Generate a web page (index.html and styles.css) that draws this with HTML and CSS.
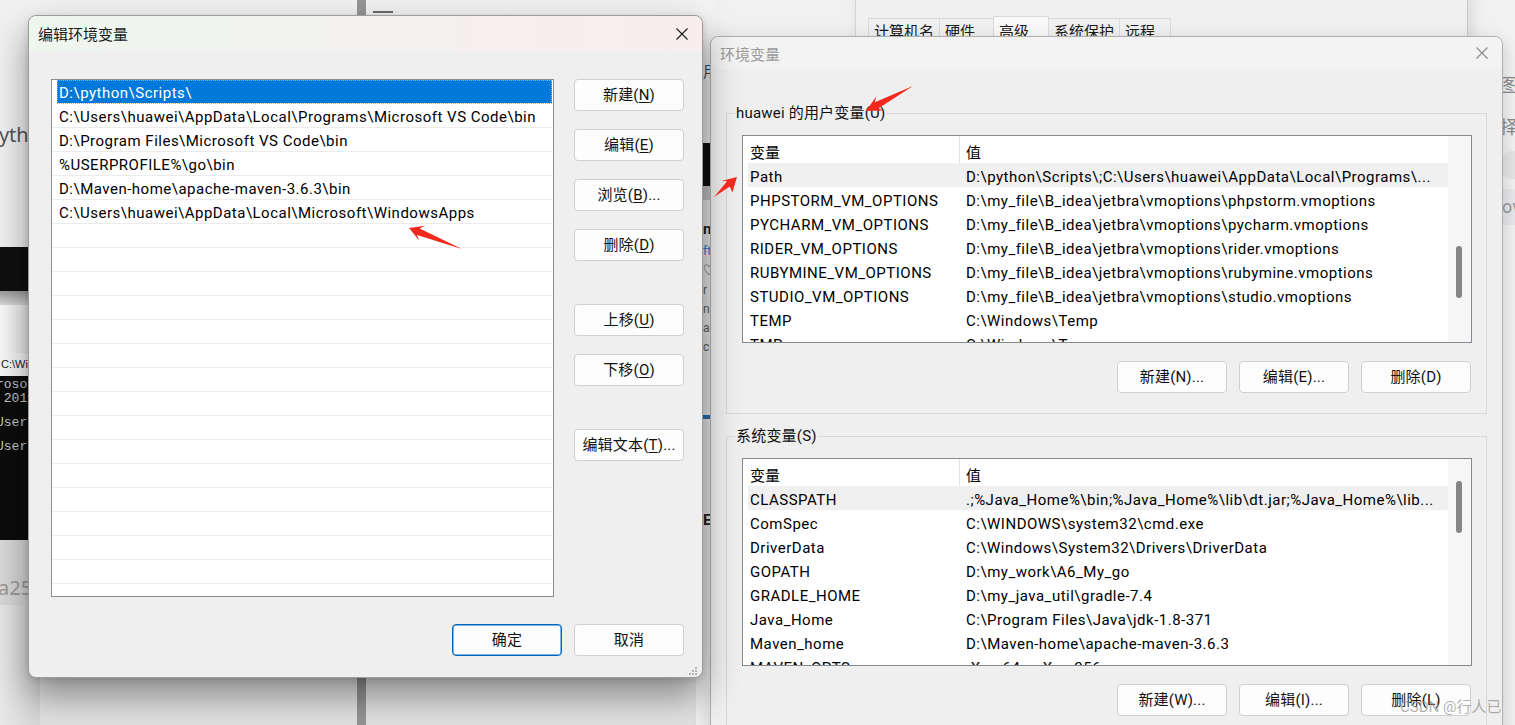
FILE: index.html
```html
<!DOCTYPE html>
<html lang="zh-CN">
<head>
<meta charset="utf-8">
<title>编辑环境变量</title>
<link rel="stylesheet" href="styles.css">
</head>
<body>
<div class="desktop">

  <!-- background content visible around the dialogs -->
  <div class="bg-left">
    <div class="bl-top"><span class="bl-ytho">pytho</span></div>
    <div class="bl-black"></div>
    <div class="bl-grad"></div>
    <div class="bl-white"></div>
    <div class="bl-cmdbar">C:\Wir</div>
    <div class="bl-term">
      <div class="t1">rosof</div>
      <div class="t2">&nbsp;2019</div>
      <div class="t3">Users</div>
      <div class="t3">Users</div>
    </div>
    <div class="bl-a25">a25</div>
    <div class="bl-rest"></div>
  </div>

  <div class="bg-vscroll"></div>
  <div class="bg-dash"></div>

  <div class="bg-mid">
    <div class="bm-sp1"></div>
    <div class="bm-txt">用</div>
    <div class="bm-sp2"></div>
    <div class="bm-black"></div>
    <div class="bm-gray"></div>
    <div class="bm-frag">n</div>
    <div class="bm-frag blue">ft</div>
    <div class="bm-frag small">♡</div>
    <div class="bm-frag small">r</div>
    <div class="bm-frag small">n</div>
    <div class="bm-frag small">ar</div>
    <div class="bm-frag small">c</div>
    <div class="bm-sp3"></div>
    <div class="bm-bluebar"></div>
    <div class="bm-sp4"></div>
    <div class="bm-frag">E</div>
  </div>

  <div class="bg-right">
    <div class="br-sp1"></div>
    <div class="br-txt">图</div>
    <div class="br-band"></div>
    <div class="br-txt">择</div>
    <div class="br-circle"></div>
    <div class="br-ov">ov</div>
  </div>

  <!-- System properties window behind -->
  <div class="win sysprops">
    <div class="tabs">
      <div class="tab">计算机名</div>
      <div class="tab">硬件</div>
      <div class="tab active">高级</div>
      <div class="tab">系统保护</div>
      <div class="tab">远程</div>
    </div>
  </div>

  <!-- Environment variables dialog (inactive) -->
  <div class="win envvars">
    <div class="titlebar inactive">
      <span class="title">环境变量</span>
      <svg class="close" width="12" height="12" viewBox="0 0 12 12"><path d="M0.5 0.5L11.5 11.5M11.5 0.5L0.5 11.5" stroke="#8a8a8a" stroke-width="1.1" fill="none"/></svg>
    </div>
    <div class="env-body">
      <fieldset class="group">
        <legend>huawei 的用户变量(U)</legend>
        <div class="listview">
          <div class="lv-main">
            <div class="lv-head"><div class="c1">变量</div><div class="c2">值</div></div>
            <div class="lv-row hl"><div class="c1">Path</div><div class="c2">D:\python\Scripts\;C:\Users\huawei\AppData\Local\Programs\...</div></div>
            <div class="lv-row"><div class="c1">PHPSTORM_VM_OPTIONS</div><div class="c2">D:\my_file\B_idea\jetbra\vmoptions\phpstorm.vmoptions</div></div>
            <div class="lv-row"><div class="c1">PYCHARM_VM_OPTIONS</div><div class="c2">D:\my_file\B_idea\jetbra\vmoptions\pycharm.vmoptions</div></div>
            <div class="lv-row"><div class="c1">RIDER_VM_OPTIONS</div><div class="c2">D:\my_file\B_idea\jetbra\vmoptions\rider.vmoptions</div></div>
            <div class="lv-row"><div class="c1">RUBYMINE_VM_OPTIONS</div><div class="c2">D:\my_file\B_idea\jetbra\vmoptions\rubymine.vmoptions</div></div>
            <div class="lv-row"><div class="c1">STUDIO_VM_OPTIONS</div><div class="c2">D:\my_file\B_idea\jetbra\vmoptions\studio.vmoptions</div></div>
            <div class="lv-row"><div class="c1">TEMP</div><div class="c2">C:\Windows\Temp</div></div>
            <div class="lv-row"><div class="c1">TMP</div><div class="c2">C:\Windows\Temp</div></div>
          </div>
          <div class="lv-scroll"><div class="thumb t-user"></div></div>
        </div>
        <div class="btn-row">
          <button class="btn">新建(N)...</button>
          <button class="btn">编辑(E)...</button>
          <button class="btn">删除(D)</button>
        </div>
      </fieldset>

      <fieldset class="group g2">
        <legend>系统变量(S)</legend>
        <div class="listview">
          <div class="lv-main">
            <div class="lv-head"><div class="c1">变量</div><div class="c2">值</div></div>
            <div class="lv-row hl"><div class="c1">CLASSPATH</div><div class="c2">.;%Java_Home%\bin;%Java_Home%\lib\dt.jar;%Java_Home%\lib...</div></div>
            <div class="lv-row"><div class="c1">ComSpec</div><div class="c2">C:\WINDOWS\system32\cmd.exe</div></div>
            <div class="lv-row"><div class="c1">DriverData</div><div class="c2">C:\Windows\System32\Drivers\DriverData</div></div>
            <div class="lv-row"><div class="c1">GOPATH</div><div class="c2">D:\my_work\A6_My_go</div></div>
            <div class="lv-row"><div class="c1">GRADLE_HOME</div><div class="c2">D:\my_java_util\gradle-7.4</div></div>
            <div class="lv-row"><div class="c1">Java_Home</div><div class="c2">C:\Program Files\Java\jdk-1.8-371</div></div>
            <div class="lv-row"><div class="c1">Maven_home</div><div class="c2">D:\Maven-home\apache-maven-3.6.3</div></div>
            <div class="lv-row"><div class="c1">MAVEN_OPTS</div><div class="c2">-Xms64m -Xmx256m</div></div>
          </div>
          <div class="lv-scroll"><div class="thumb t-sys"></div></div>
        </div>
        <div class="btn-row">
          <button class="btn">新建(W)...</button>
          <button class="btn">编辑(I)...</button>
          <button class="btn">删除(L)</button>
        </div>
      </fieldset>
    </div>
  </div>

  <!-- Edit environment variable dialog (active) -->
  <div class="win editenv">
    <div class="titlebar active">
      <span class="title">编辑环境变量</span>
      <svg class="close" width="12" height="12" viewBox="0 0 12 12"><path d="M0.5 0.5L11.5 11.5M11.5 0.5L0.5 11.5" stroke="#1a1a1a" stroke-width="1.1" fill="none"/></svg>
    </div>
    <div class="edit-body">
      <div class="pathlist">
        <div class="prow sel">D:\python\Scripts\</div>
        <div class="prow">C:\Users\huawei\AppData\Local\Programs\Microsoft VS Code\bin</div>
        <div class="prow">D:\Program Files\Microsoft VS Code\bin</div>
        <div class="prow">%USERPROFILE%\go\bin</div>
        <div class="prow">D:\Maven-home\apache-maven-3.6.3\bin</div>
        <div class="prow">C:\Users\huawei\AppData\Local\Microsoft\WindowsApps</div>
        <div class="prow"></div><div class="prow"></div><div class="prow"></div><div class="prow"></div>
        <div class="prow"></div><div class="prow"></div><div class="prow"></div><div class="prow"></div>
        <div class="prow"></div><div class="prow"></div><div class="prow"></div><div class="prow"></div>
        <div class="prow"></div><div class="prow"></div><div class="prow"></div><div class="prow"></div>
      </div>
      <div class="side-btns">
        <button class="btn">新建(<u>N</u>)</button>
        <button class="btn">编辑(<u>E</u>)</button>
        <button class="btn">浏览(<u>B</u>)...</button>
        <button class="btn">删除(<u>D</u>)</button>
        <button class="btn gap">上移(<u>U</u>)</button>
        <button class="btn">下移(<u>O</u>)</button>
        <button class="btn gap">编辑文本(<u>T</u>)...</button>
      </div>
      <div class="footer">
        <button class="btn default">确定</button>
        <button class="btn">取消</button>
      </div>
    </div>
    <svg class="grip" width="10" height="10" viewBox="0 0 10 10">
      <rect x="7" y="1" width="2" height="2" fill="#b4b4b4"/>
      <rect x="4" y="4" width="2" height="2" fill="#b4b4b4"/>
      <rect x="7" y="4" width="2" height="2" fill="#b4b4b4"/>
      <rect x="1" y="7" width="2" height="2" fill="#b4b4b4"/>
      <rect x="4" y="7" width="2" height="2" fill="#b4b4b4"/>
      <rect x="7" y="7" width="2" height="2" fill="#b4b4b4"/>
    </svg>
  </div>

  <!-- annotation arrows -->
  <svg class="arrows" width="1515" height="725" viewBox="0 0 1515 725">
    <polygon fill="#f5281e" points="409,228 424.9,225.7 419.6,228.4 462,249 417.0,234.9 419.1,240.6"/>
    <polygon fill="#f5281e" points="737,177 732.4,192.5 729.8,186.6 714,197 727.2,181.3 721.4,180.9"/>
    <polygon fill="#f5281e" points="866,111 883.8,110.4 878.2,108.4 913,86 874.9,102.2 876.2,96.4"/>
  </svg>

  <div class="watermark">CSDN @行人已</div>
</div>
</body>
</html>
```

FILE: styles.css
```css
* { box-sizing: border-box; }
html, body { margin: 0; padding: 0; }
body {
  width: 1515px;
  height: 725px;
  overflow: hidden;
  font-family: "Roboto", "Noto Sans CJK SC", sans-serif;
  font-size: 15px;
  color: #000;
  background: #ececec;
}
.desktop {
  position: relative;
  width: 1515px;
  height: 725px;
  overflow: hidden;
  background: linear-gradient(#f1f1f1 0, #eeeeee 600px, #e2e2e2 725px);
}

/* ---------- background fragments ---------- */
.bg-left {
  position: absolute;
  left: 0; top: 0;
  width: 40px; height: 725px;
  display: flex; flex-direction: column;
  overflow: hidden;
}
.bl-top { height: 247px; background: #f1f1f1; padding-top: 121px; }
.bl-ytho { display: block; margin-left: -13px; font-size: 20px; color: #555; line-height: 28px; font-family: "Noto Sans", sans-serif; }
.bl-black { height: 44px; background: #101010; }
.bl-grad { height: 14px; background: linear-gradient(#9c9c9c, #d8d8d8); }
.bl-white { height: 48px; background: linear-gradient(90deg, #fbfbfb, #e2e2e2); }
.bl-cmdbar { height: 23px; background: #f7f7f7; font-size: 11px; line-height: 23px; color: #222; padding-left: 1px; font-family: "Liberation Sans", sans-serif; }
.bl-term { height: 164px; background: #0c0c0c; color: #c8c8c8; font-family: "Liberation Mono", monospace; font-size: 13px; padding-top: 2px; margin-left: -4px; }
.bl-term .t1 { line-height: 14px; }
.bl-term .t2 { line-height: 14px; margin-bottom: 10px; }
.bl-term .t3 { line-height: 14px; margin-bottom: 10px; }
.bl-a25 { height: 65px; background: #d9d9d9; color: #9c9c9c; font-size: 20px; line-height: 20px; padding-top: 38px; margin-left: -2px; font-family: "Noto Sans", sans-serif; }
.bl-rest { flex: 1; background: linear-gradient(90deg, #e8e8e8, #d6d6d6); }

.bg-vscroll {
  position: absolute; left: 357px; top: -6px;
  width: 9px; height: 740px;
  background: #959595; border-radius: 4px;
}
.bg-dash {
  position: absolute; left: 373px; top: 11px;
  width: 20px; height: 2px; background: #6c6c6c;
}

.bg-mid {
  position: absolute; left: 696px; top: 0;
  width: 20px; height: 725px;
  background: #f3f3f3;
  display: flex; flex-direction: column;
  padding-left: 7px;
  overflow: hidden;
}
.bm-sp1 { height: 64px; }
.bm-txt { font-size: 15px; line-height: 16px; color: #444; }
.bm-sp2 { height: 63px; }
.bm-black { height: 43px; background: #111; margin-left: -7px; }
.bm-gray { height: 14px; background: #c9c9c9; margin-left: -7px; margin-bottom: 18px; }
.bm-frag { font-size: 15px; line-height: 22px; color: #222; font-weight: 700; }
.bm-frag.blue { color: #2f7fd0; font-size: 12px; font-weight: 400; }
.bm-frag.small { font-size: 12px; line-height: 19px; color: #666; font-weight: 400; }
.bm-sp3 { height: 58px; }
.bm-bluebar { height: 4px; background: #2c6fb6; }
.bm-sp4 { height: 90px; }

.bg-right {
  position: absolute; left: 1497px; top: 0;
  width: 18px; height: 725px;
  background: #f2f2f2;
  display: flex; flex-direction: column;
  overflow: hidden;
}
.br-sp1 { height: 77px; }
.br-txt { font-size: 18px; line-height: 18px; color: #8a8a8a; margin-left: 3px; }
.br-band { height: 24px; }
.br-circle { width: 30px; height: 28px; border-radius: 14px; background: #e6e6e6; margin: 14px 0 10px 2px; }
.br-ov { height: 36px; background: #e7e7ec; color: #9a9a9a; font-size: 18px; line-height: 36px; padding-left: 5px; }

/* ---------- windows ---------- */
.win { position: absolute; }

.sysprops {
  left: 855px; top: -10px;
  width: 613px; height: 90px;
  background: #f0f0f0;
  border-left: 1px solid #d4d4d4;
  border-right: 1px solid #c8c8c8;
  box-shadow: 4px 0 14px rgba(0,0,0,0.10);
}
.tabs {
  display: flex;
  margin: 26px 0 0 12px;
  align-items: flex-end;
}
.tab {
  height: 40px;
  padding: 2px 0 0 5px;
  border: 1px solid #dadada;
  border-right: none;
  border-bottom: none;
  background: #f0f0f0;
  font-size: 15px;
  line-height: 22px;
  color: #1a1a1a;
  white-space: nowrap;
  overflow: hidden;
  flex: none;
}
.tab:nth-child(1) { width: 71px; }
.tab:nth-child(2) { width: 54px; }
.tab.active { width: 56px; height: 42px; background: #f9f9f9; border-right: 1px solid #dadada; padding-top: 4px; }
.tab:nth-child(4) { width: 70px; border-left: none; }
.tab:nth-child(5) { width: 52px; border-right: 1px solid #dadada; }

/* title bars */
.titlebar {
  display: flex; align-items: center; justify-content: space-between;
  font-family: "Noto Sans CJK SC", sans-serif;
  font-size: 15px;
}
.titlebar .close { display: block; }

/* Environment variables dialog */
.envvars {
  left: 710px; top: 36px;
  width: 793px; height: 720px;
  background: #efefef;
  border: 1px solid #b0b0b0;
  border-radius: 8px 8px 0 0;
  box-shadow: 0 6px 20px rgba(0,0,0,0.18);
}
.envvars .titlebar {
  height: 32px;
  padding: 0 14px 0 9px;
  background: #f3f3f3;
  border-radius: 8px 8px 0 0;
  color: #9b9b9b;
}
.env-body { padding: 34px 15px 0 15px; }

.group {
  margin: 0;
  border: 1px solid #d9d9d9;
  padding: 12px 14px 20px 15px;
  min-width: 0;
}
.group legend {
  padding: 0 1px;
  margin-left: -7px;
  line-height: 20px;
  height: 20px;
  font-size: 15px;
  color: #111;
  letter-spacing: 0.2px;
}
.group.g2 { margin-top: 12px; }
.group.g2 .btn-row { margin-top: 18px; }

.listview {
  display: flex;
  height: 208px;
  border: 1px solid #858a90;
  background: #fff;
  overflow: hidden;
}
.lv-main { flex: 1; min-width: 0; padding-left: 5px; }
.lv-head { display: flex; height: 27px; line-height: 34px; }
.lv-head .c1 { border-right: 1px solid #e3e3e3; }
.lv-row { display: flex; height: 24px; line-height: 29px; letter-spacing: 0.5px; }
.lv-row.hl { background: #f0f0f0; }
.c1 { width: 212px; flex: none; padding-left: 2px; white-space: nowrap; overflow: hidden; }
.c2 { flex: 1; padding-left: 6px; white-space: nowrap; overflow: hidden; }
.lv-scroll { width: 23px; flex: none; background: #f6f6f6; position: relative; }
.thumb { position: absolute; left: 8px; width: 6px; border-radius: 3px; background: #868686; }
.t-user { top: 110px; height: 52px; }
.t-sys { top: 22px; height: 52px; }

.btn-row {
  display: flex; justify-content: flex-end; gap: 12px;
  margin-top: 18px; padding-right: 1px;
}

.btn {
  width: 110px; height: 32px;
  border: 1px solid #d0d0d0;
  border-radius: 4px;
  background: #fdfdfd;
  font-family: "Roboto", "Noto Sans CJK SC", sans-serif;
  font-size: 15px;
  color: #111;
  padding: 0;
  line-height: 31px;
  text-align: center;
  letter-spacing: 0.2px;
}
.btn u { text-underline-offset: 2px; }
.btn.default { border: 1px solid #0067c0; box-shadow: inset 0 0 0 0.5px #0067c0; }

/* Edit environment variable dialog */
.editenv {
  left: 28px; top: 15px;
  width: 675px; height: 663px;
  background: #efefef;
  border: 1px solid #9c9c9c;
  border-radius: 8px;
  box-shadow: 0 18px 36px rgba(0,0,0,0.42), 0 2px 6px rgba(0,0,0,0.12);
}
.editenv .titlebar {
  height: 35px;
  padding: 0 14px 0 9px;
  background: linear-gradient(90deg, #eef6ee 0%, #f3f1f0 50%, #f9eded 100%);
  border-radius: 8px 8px 0 0;
  color: #1a1a1a;
}
.edit-body {
  display: grid;
  grid-template-columns: 503px 110px;
  grid-template-rows: 518px auto;
  column-gap: 20px;
  padding: 28px 0 0 22px;
}
.pathlist {
  border: 1px solid #8a8d93;
  background: #fff;
  overflow: hidden;
  padding-left: 1px;
}
.prow {
  height: 24px;
  line-height: 27px;
  border-bottom: 1px solid #ebebeb;
  padding-left: 6px;
  white-space: nowrap;
  letter-spacing: 0.5px;
}
.prow.sel {
  background: #0078d7;
  color: #fff;
  margin-left: 4px;
  margin-right: 1px;
  padding-left: 2px;
  outline: 1px dotted #e8a050;
  outline-offset: -1px;
  border-bottom-color: #fff;
}
.side-btns { display: flex; flex-direction: column; gap: 18px; }
.side-btns .btn.gap { margin-top: 25px; }
.footer {
  grid-column: 1 / 3;
  display: flex; justify-content: flex-end; gap: 12px;
  margin-top: 27px;
}
.grip { position: absolute; right: 4px; bottom: 1px; }

/* overlays */
.arrows { position: absolute; left: 0; top: 0; pointer-events: none; }
.watermark {
  position: absolute; left: 1400px; top: 697px;
  font-size: 15px; line-height: 20px;
  color: rgba(150,150,150,0.75);
  font-family: "Roboto", "Noto Sans CJK SC", sans-serif;
}
```
